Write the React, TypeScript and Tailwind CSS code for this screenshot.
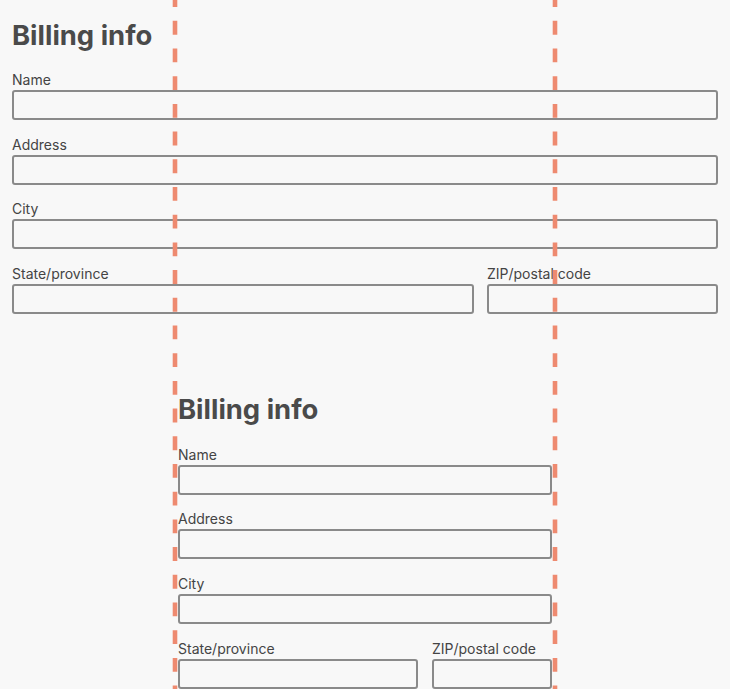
import React from 'react';

interface FieldProps {
  label: string;
  className?: string;
}

function Field({ label, className = '' }: FieldProps) {
  return (
    <label className={`flex flex-col min-w-0 ${className}`}>
      <span className="block text-[14px] leading-[19px] text-[#444] mb-px">{label}</span>
      <input
        type="text"
        className="block w-full h-[30px] rounded-[3px] border-2 border-[#8a8a8a] bg-transparent px-2 text-[14px] outline-none"
      />
    </label>
  );
}

function BillingForm({ rowGap }: { rowGap: string }) {
  return (
    <form className="flex flex-col">
      <h2 className="mt-[17.5px] mb-[18.5px] text-[27.4px] leading-[34px] font-bold text-[#4a4a4a]">
        Billing info
      </h2>
      <div className="flex flex-col gap-[14.67px]">
        <Field label="Name" />
        <Field label="Address" />
        <Field label="City" />
        <div className={`grid grid-cols-[2fr_1fr] ${rowGap}`}>
          <Field label="State/province" />
          <Field label="ZIP/postal code" />
        </div>
      </div>
    </form>
  );
}

export default function App() {
  return (
    <div className="relative h-[689px] w-full overflow-hidden bg-[#f8f8f8] font-['Inter','Liberation_Sans',sans-serif]">
      <div className="px-3">
        <BillingForm rowGap="gap-[13px]" />
      </div>

      <div className="mx-auto mt-[60.7px] w-[374px]">
        <BillingForm rowGap="gap-[14px]" />
      </div>

      {/* max-width guides */}
      <svg className="pointer-events-none absolute inset-0 h-full w-full" aria-hidden="true">
        <line x1="175" y1="0" x2="175" y2="689" stroke="#ee8a70" strokeWidth="4.6" strokeDasharray="13.85 13.85" strokeDashoffset="6.9" />
        <line x1="555" y1="0" x2="555" y2="689" stroke="#ee8a70" strokeWidth="4.6" strokeDasharray="13.85 13.85" strokeDashoffset="6.9" />
      </svg>
    </div>
  );
}
